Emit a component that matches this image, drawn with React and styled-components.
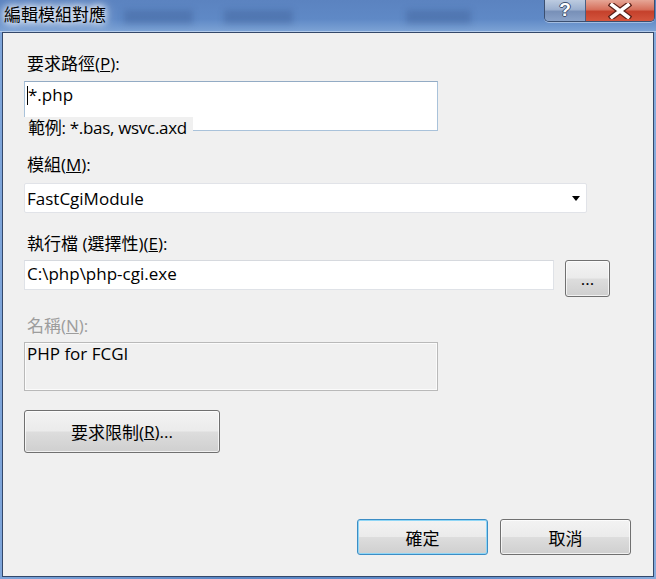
import React from 'react';
import styled, { createGlobalStyle } from 'styled-components';

const GlobalStyle = createGlobalStyle`
    html, body {
        margin: 0;
        padding: 0;
    }
    body {
        width: 656px;
        height: 579px;
        overflow: hidden;
        font-family: "Open Sans", "Noto Sans CJK TC", sans-serif;
        font-size: 17px;
        color: #000;
    }
`

const Window = styled.div`
    width: 656px;
    height: 579px;
    display: flex;
    flex-direction: column;
    background: linear-gradient(90deg, #7ea5da 0%, #5a86c4 35%, #5f8bc9 70%, #86abdc 100%);
`

const TitleBar = styled.div`
    height: 32px;
    flex: none;
    display: flex;
    align-items: flex-start;
    background: linear-gradient(180deg, #5b83c0 0%, #5f89c6 60%, #7ea4d6 100%);
    box-shadow: inset 0 -1px 0 #b3cbea;
`

const Title = styled.div`
    padding: 3px 0 0 4px;
    font-family: "Noto Sans CJK TC", sans-serif;
    font-size: 17px;
    line-height: 22px;
    color: #000;
    text-shadow: 0 0 6px #fff, 0 0 10px #fff, 0 0 14px rgba(255, 255, 255, 0.9);
`

const Ghost = styled.span`
    margin-top: 10px;
    margin-left: ${p => p.$left}px;
    width: ${p => p.$width}px;
    height: 14px;
    background: rgba(38, 66, 120, 0.25);
    filter: blur(3px);
`

const Spacer = styled.div`
    flex: 1;
`

const Caption = styled.div`
    display: flex;
    height: 21px;
    margin-right: 1px;
    border: 1px solid #3b4f70;
    border-top: none;
    border-radius: 0 0 5px 5px;
    overflow: hidden;
    box-shadow: 0 1px 0 rgba(255, 255, 255, 0.4);
`

const CaptionButton = styled.div`
    width: ${p => p.$width}px;
    display: flex;
    align-items: center;
    justify-content: center;
    background: ${p => p.$close
        ? 'linear-gradient(180deg, #e6a696 0%, #d6705c 45%, #c5412c 55%, #d4553d 100%)'
        : 'linear-gradient(180deg, #bccbe0 0%, #9cb0cf 45%, #7890b8 55%, #8aa2c8 100%)'};
    & + & {
        border-left: 1px solid #4a5f82;
    }
`

const HelpGlyph = styled.span`
    font-family: "Liberation Sans", sans-serif;
    font-weight: bold;
    font-size: 19px;
    line-height: 19px;
    margin-top: -3px;
    color: #fff;
    text-shadow: -1px 0 #3d5070, 1px 0 #3d5070, 0 -1px #3d5070, 0 1px #3d5070;
`

const Frame = styled.div`
    flex: 1;
    display: flex;
    padding: 0 2px 2px 2px;
`

const Client = styled.div`
    flex: 1;
    display: flex;
    flex-direction: column;
    background: #f0f0f0;
    border: 1px solid #34486a;
    padding: 21px 22px 21px 21px;
`

const Label = styled.div`
    height: 20px;
    line-height: 20px;
    padding-left: 3px;
    margin-top: ${p => p.$top || 0}px;
    margin-bottom: ${p => p.$gap}px;
    color: ${p => p.$disabled ? '#9d9d9d' : '#000'};
`

const FieldWrap = styled.div`
    position: relative;
    width: ${p => p.$width}px;
`

const TextBox = styled.div`
    box-sizing: border-box;
    width: ${p => p.$width}px;
    height: ${p => p.$height}px;
    background: #fff;
    border: 1px solid ${p => p.$accent ? '#a9c2da' : '#dfe2e7'};
    border-top-color: ${p => p.$accent ? '#93abc4' : '#d6d9de'};
    padding: 1px 2px 0 2px;
    line-height: 24px;
    white-space: nowrap;
`

const Caret = styled.span`
    display: inline-block;
    width: 1px;
    height: 19px;
    background: #000;
    vertical-align: -4px;
`

const Hint = styled.div`
    position: absolute;
    left: 0;
    top: 36px;
    width: 169px;
    height: 21px;
    box-sizing: border-box;
    padding-left: 4px;
    line-height: 21px;
    letter-spacing: -0.3px;
    background: #f0f0f0;
    white-space: nowrap;
`

const Select = styled.div`
    box-sizing: border-box;
    width: 563px;
    height: 30px;
    display: flex;
    align-items: center;
    justify-content: space-between;
    background: #fff;
    border: 1px solid #e1e3e8;
    border-radius: 2px;
    padding: 0 6px 0 2px;
`

const Arrow = styled.span`
    width: 0;
    height: 0;
    border-left: 4px solid transparent;
    border-right: 4px solid transparent;
    border-top: 5px solid #000;
    margin-top: 1px;
`

const Row = styled.div`
    display: flex;
    align-items: flex-start;
    gap: 11px;
`

const DisabledBox = styled.div`
    box-sizing: border-box;
    width: 414px;
    height: 49px;
    border: 1px solid #b9b9b9;
    box-shadow: inset 0 0 0 1px #fbfbfb;
    padding: 0 2px;
    line-height: 22px;
`

const Button = styled.div`
    box-sizing: border-box;
    width: ${p => p.$width}px;
    height: ${p => p.$height}px;
    margin-top: ${p => p.$top || 0}px;
    display: flex;
    align-items: center;
    justify-content: center;
    border: 1px solid ${p => p.$default ? '#3c8dc5' : '#707070'};
    border-radius: 3px;
    background: linear-gradient(180deg, #f3f3f3 0%, #ebebeb 49%, #dddddd 51%, #cfcfcf 100%);
    box-shadow: inset 0 0 0 1px ${p => p.$default ? '#8fd6f6' : 'rgba(255, 255, 255, 0.7)'};
`

const Footer = styled.div`
    margin-top: auto;
    display: flex;
    justify-content: flex-end;
    gap: 12px;
`

const CloseIcon = () => (
    <svg width="24" height="16" viewBox="0 0 24 16">
        <path d="M4 2 L20 14 M20 2 L4 14" stroke="#5a2018" strokeWidth="6" strokeLinecap="square" />
        <path d="M4 2 L20 14 M20 2 L4 14" stroke="#fff" strokeWidth="3.6" strokeLinecap="square" />
    </svg>
)

const App = () => {
    return (
        <Window>
            <GlobalStyle />
            <TitleBar>
                <Title>編輯模組對應</Title>
                <Ghost $left={18} $width={69} />
                <Ghost $left={31} $width={69} />
                <Ghost $left={113} $width={65} />
                <Spacer />
                <Caption>
                    <CaptionButton $width={40}><HelpGlyph>?</HelpGlyph></CaptionButton>
                    <CaptionButton $width={68} $close><CloseIcon /></CaptionButton>
                </Caption>
            </TitleBar>
            <Frame>
                <Client>
                    <Label $gap={7}>要求路徑(<u>P</u>):</Label>
                    <FieldWrap $width={414}>
                        <TextBox $width={414} $height={50} $accent><Caret />*.php</TextBox>
                        <Hint>範例: *.bas, wsvc.axd</Hint>
                    </FieldWrap>
                    <Label $top={24} $gap={8}>模組(<u>M</u>):</Label>
                    <Select>
                        <span>FastCgiModule</span>
                        <Arrow />
                    </Select>
                    <Label $top={21} $gap={6}>執行檔 (選擇性)(<u>E</u>):</Label>
                    <Row>
                        <TextBox $width={530} $height={30}>C:\php\php-cgi.exe</TextBox>
                        <Button $width={45} $height={37}>...</Button>
                    </Row>
                    <Label $top={19} $gap={6} $disabled>名稱(<u>N</u>):</Label>
                    <DisabledBox>PHP for FCGI</DisabledBox>
                    <Button $width={196} $height={43} $top={19}>要求限制(<u>R</u>)...</Button>
                    <Footer>
                        <Button $width={131} $height={36} $default>確定</Button>
                        <Button $width={131} $height={36}>取消</Button>
                    </Footer>
                </Client>
            </Frame>
        </Window>
    );
}

export default App;
